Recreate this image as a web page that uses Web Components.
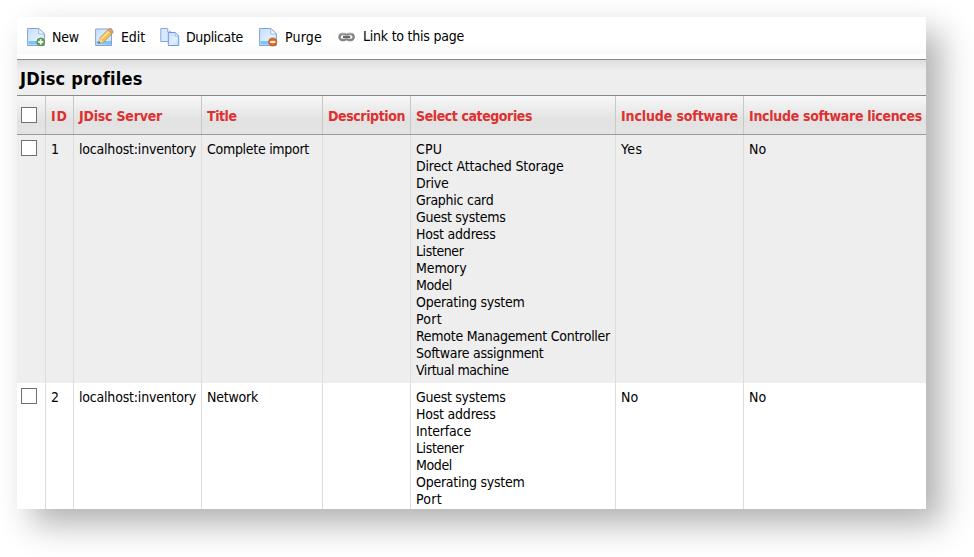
<!DOCTYPE html>
<html lang="en"><head><meta charset="utf-8"><title>JDisc profiles</title>
<style>html,body{margin:0;background:#fff;overflow:hidden}body{padding:17px 48px 48px 17px;box-sizing:border-box;width:974px;height:557px;font:14px/17px "DejaVu Sans Condensed","DejaVu Sans",sans-serif;font-stretch:condensed;color:#000}</style></head>
<body><profile-panel></profile-panel>
<script>
const define=(name,html,setup)=>{
  const t=document.createElement('template');t.innerHTML=html;
  customElements.define(name,class extends HTMLElement{
    connectedCallback(){
      if(this.shadowRoot)return;
      this.attachShadow({mode:'open'}).append(t.content.cloneNode(true));
      if(setup)setup(this,this.shadowRoot);
    }
  });
};

// A single line of text whose tracking is adjusted to a given advance width.
define('text-run','<style>:host{display:block;white-space:nowrap}span{display:inline-block;vertical-align:top}</style><span></span>',(el,r)=>{
  const s=r.querySelector('span'),txt=el.getAttribute('label');
  s.textContent=txt;
  const w=+el.getAttribute('w');
  if(w)s.style.letterSpacing=(w-s.getBoundingClientRect().width)/txt.length+'px';
});

const page='<path d="M1.6 1.5H13L18.5 7V18.5H1.6Z" fill="url(#g)" stroke="#7fa5d8"/><path d="M2.5 14H17.5V17.5H2.5Z" fill="#7dc3f8"/><path d="M12.7 1.5V7H18.5Z" fill="#f4f9ff" stroke="#8badda" stroke-width=".8"/>';
const grad='<defs><linearGradient id="g" x2="1" y2="1"><stop stop-color="#c5defa"/><stop offset=".6" stop-color="#e2effe"/><stop offset="1" stop-color="#b5d8fb"/></linearGradient><radialGradient id="o"><stop stop-color="#f9934d"/><stop offset="1" stop-color="#d3540f"/></radialGradient></defs>';
const icons={
  add:page+'<circle cx="14.7" cy="14.9" r="3.9" fill="#69a04c" stroke="#4c8138" stroke-width=".7"/><path d="M14.7 12.3v5.2M12.1 14.9h5.2" stroke="#fff" stroke-width="1.7"/>',
  edit:'<path d="M1.6 2H17.5V18.5H1.6Z" fill="url(#g)" stroke="#7fa5d8"/><path d="M2.5 14H17V17.5H2.5Z" fill="#7dc3f8"/><path d="M4.2 16.5L5.7 10.9 13.8 2.8 17.9 6.9 9.8 15Z" fill="#f4bd4c" stroke="#a87b35" stroke-width=".6"/><path d="M7.5 11.8L15.2 4.4" stroke="#ffe29a" stroke-width="1.8"/><path d="M4.2 16.5L5.7 10.9 9.8 15Z" fill="#f0d5a9"/><path d="M4.3 16.4l.7-2.2 1.5 1.5Z" fill="#555"/><path d="M13.8 2.8L15.1 1.5Q16.6 .9 18 2.3T19.2 5.6L17.9 6.9Z" fill="#dc9c76" stroke="#b58a70" stroke-width=".5"/>',
  copy:'<path d="M.8 1.5H7.5L10.8 4.8V14.5H.8Z" fill="#d7e9fe" stroke="#83a9df"/><path d="M7.5 1.5V4.8H10.8" fill="#fff" stroke="#83a9df" stroke-width=".8"/><path d="M8.3 5.5H15.4L18.7 8.8V18.5H8.3Z" fill="url(#g)" stroke="#6f9ad9"/><path d="M15.2 5.5V9H18.7Z" fill="#fff" stroke="#83a9df" stroke-width=".8"/>',
  remove:page+'<circle cx="14.7" cy="15" r="4.1" fill="url(#o)" stroke="#c9612a" stroke-width=".6"/><path d="M12 15h5.4" stroke="#fff" stroke-width="1.8"/>',
  link:'<g fill="none"><rect x="2.5" y="7" width="7.3" height="6" rx="3" stroke="#858585" stroke-width="2.4"/><rect x="9.4" y="7" width="7.3" height="6" rx="3" stroke="#858585" stroke-width="2.4"/><path d="M4 6.7h4.5M11 6.7h4.3" stroke="#bbb" stroke-width=".9"/><path d="M6 10h7.2" stroke="#ccc" stroke-width="3.2"/><path d="M6 10h7.2" stroke="#505050" stroke-width="1.6"/></g>'
};
define('tool-button','<style>:host{display:flex;align-items:flex-start;flex:none}svg{width:20px;height:20px;flex:none;margin-right:6px;display:block}text-run{margin-top:2px}:host([icon=edit]) text-run,:host([icon=remove]) text-run{margin-left:1px}:host([icon=link]) text-run{margin-top:1px}</style><svg viewBox="0 0 20 20"></svg><text-run></text-run>',(el,r)=>{
  r.querySelector('svg').innerHTML=grad+icons[el.getAttribute('icon')];
  const old=r.querySelector('text-run'),n=document.createElement('text-run');
  n.setAttribute('label',el.getAttribute('label'));n.setAttribute('w',el.getAttribute('w'));
  old.replaceWith(n);
});
define('tool-bar',`<style>:host{display:grid;grid-template-columns:68px 66px 98px 79px 120px;align-items:start;padding:10px 0 0 9px;height:42px;box-sizing:border-box;background:linear-gradient(#fff 0,#fff 27px,#fafafa 37px,#fff 37px)}</style>
<tool-button icon="add" label="New" w="27"></tool-button><tool-button icon="edit" label="Edit" w="24"></tool-button><tool-button icon="copy" label="Duplicate" w="57"></tool-button><tool-button icon="remove" label="Purge" w="37"></tool-button><tool-button icon="link" label="Link to this page" w="101"></tool-button>`);
define('panel-title','<style>:host{display:block;box-sizing:border-box;height:37px;border-top:1px solid #888;border-bottom:1px solid #888;background:linear-gradient(#dedede,#eee 11px);padding:7px 0 0 3px;font-weight:bold;font-size:18px;line-height:23px}</style><text-run label="JDisc profiles" w="122"></text-run>');
define('check-box','<style>:host{display:block;width:16px;height:16px;box-sizing:border-box;border:1px solid #707070;background:#fff}</style>');
define('table-cell','<style>:host{display:block;box-sizing:border-box;padding:6px 0 4px 5px;border-right:1px solid var(--rule);min-width:0}:host(:first-child){padding:5px 0 0 4px}:host(:last-child){border-right:0}</style><slot></slot>');
define('table-row','<style>:host{display:grid;grid-template-columns:29px 28px 128px 121px 88px 205px 128px 182px;background:var(--fill);--rule:#ddd}:host([head]){height:39px;box-sizing:border-box;border-bottom:1px solid #999;background:linear-gradient(#f7f7f7,#e2e2e2 65%,#e4e4e4);--rule:#c8c8c8;color:#de3030;font-weight:bold}:host([head]) ::slotted(table-cell){padding-top:12px}:host([head]) ::slotted(table-cell:first-child){padding-top:11px}</style><slot></slot>');

const cell=list=>'<table-cell>'+list.map(([t,w])=>`<text-run label="${t}" w="${w}"></text-run>`).join('')+'</table-cell>';
const box='<table-cell><check-box></check-box></table-cell>';
const W={CPU:26,'Direct Attached Storage':147.5,Drive:32.5,'Graphic card':77.5,'Guest systems':89.5,'Host address':79.5,Listener:47.5,Memory:50.5,Model:36,'Operating system':108.5,Port:26,'Remote Management Controller':194,'Software assignment':127.5,'Virtual machine':92.5,Interface:55};
const cats=names=>cell(names.map(n=>[n,W[n]]));
define('profile-table',`<style>:host{display:block;flex:1;min-height:0;overflow:hidden}.a{--fill:#eee}.b{--fill:#fff;height:140px}</style>
<table-row head>${box}${[['ID',17],['JDisc Server',83],['Title',29.5],['Description',77],['Select categories',116],['Include software',117],['Include software licences',173]].map(x=>cell([x])).join('')}</table-row>
<table-row class="a">${box}${cell([['1',8]])}${cell([['localhost:inventory',117]])}${cell([['Complete import',102]])}${cell([])}${cats(['CPU','Direct Attached Storage','Drive','Graphic card','Guest systems','Host address','Listener','Memory','Model','Operating system','Port','Remote Management Controller','Software assignment','Virtual machine'])}${cell([['Yes',21.5]])}${cell([['No',17.5]])}</table-row>
<table-row class="b">${box}${cell([['2',8]])}${cell([['localhost:inventory',117]])}${cell([['Network',51]])}${cell([])}${cats(['Guest systems','Host address','Interface','Listener','Model','Operating system','Port'])}${cell([['No',17.5]])}${cell([['No',17.5]])}</table-row>`);
define('profile-panel','<style>:host{display:flex;flex-direction:column;height:492px;width:909px;background:#fff;box-shadow:15px 15px 31px rgba(0,0,0,.31)}</style><tool-bar></tool-bar><panel-title></panel-title><profile-table></profile-table>');
</script></body></html>
